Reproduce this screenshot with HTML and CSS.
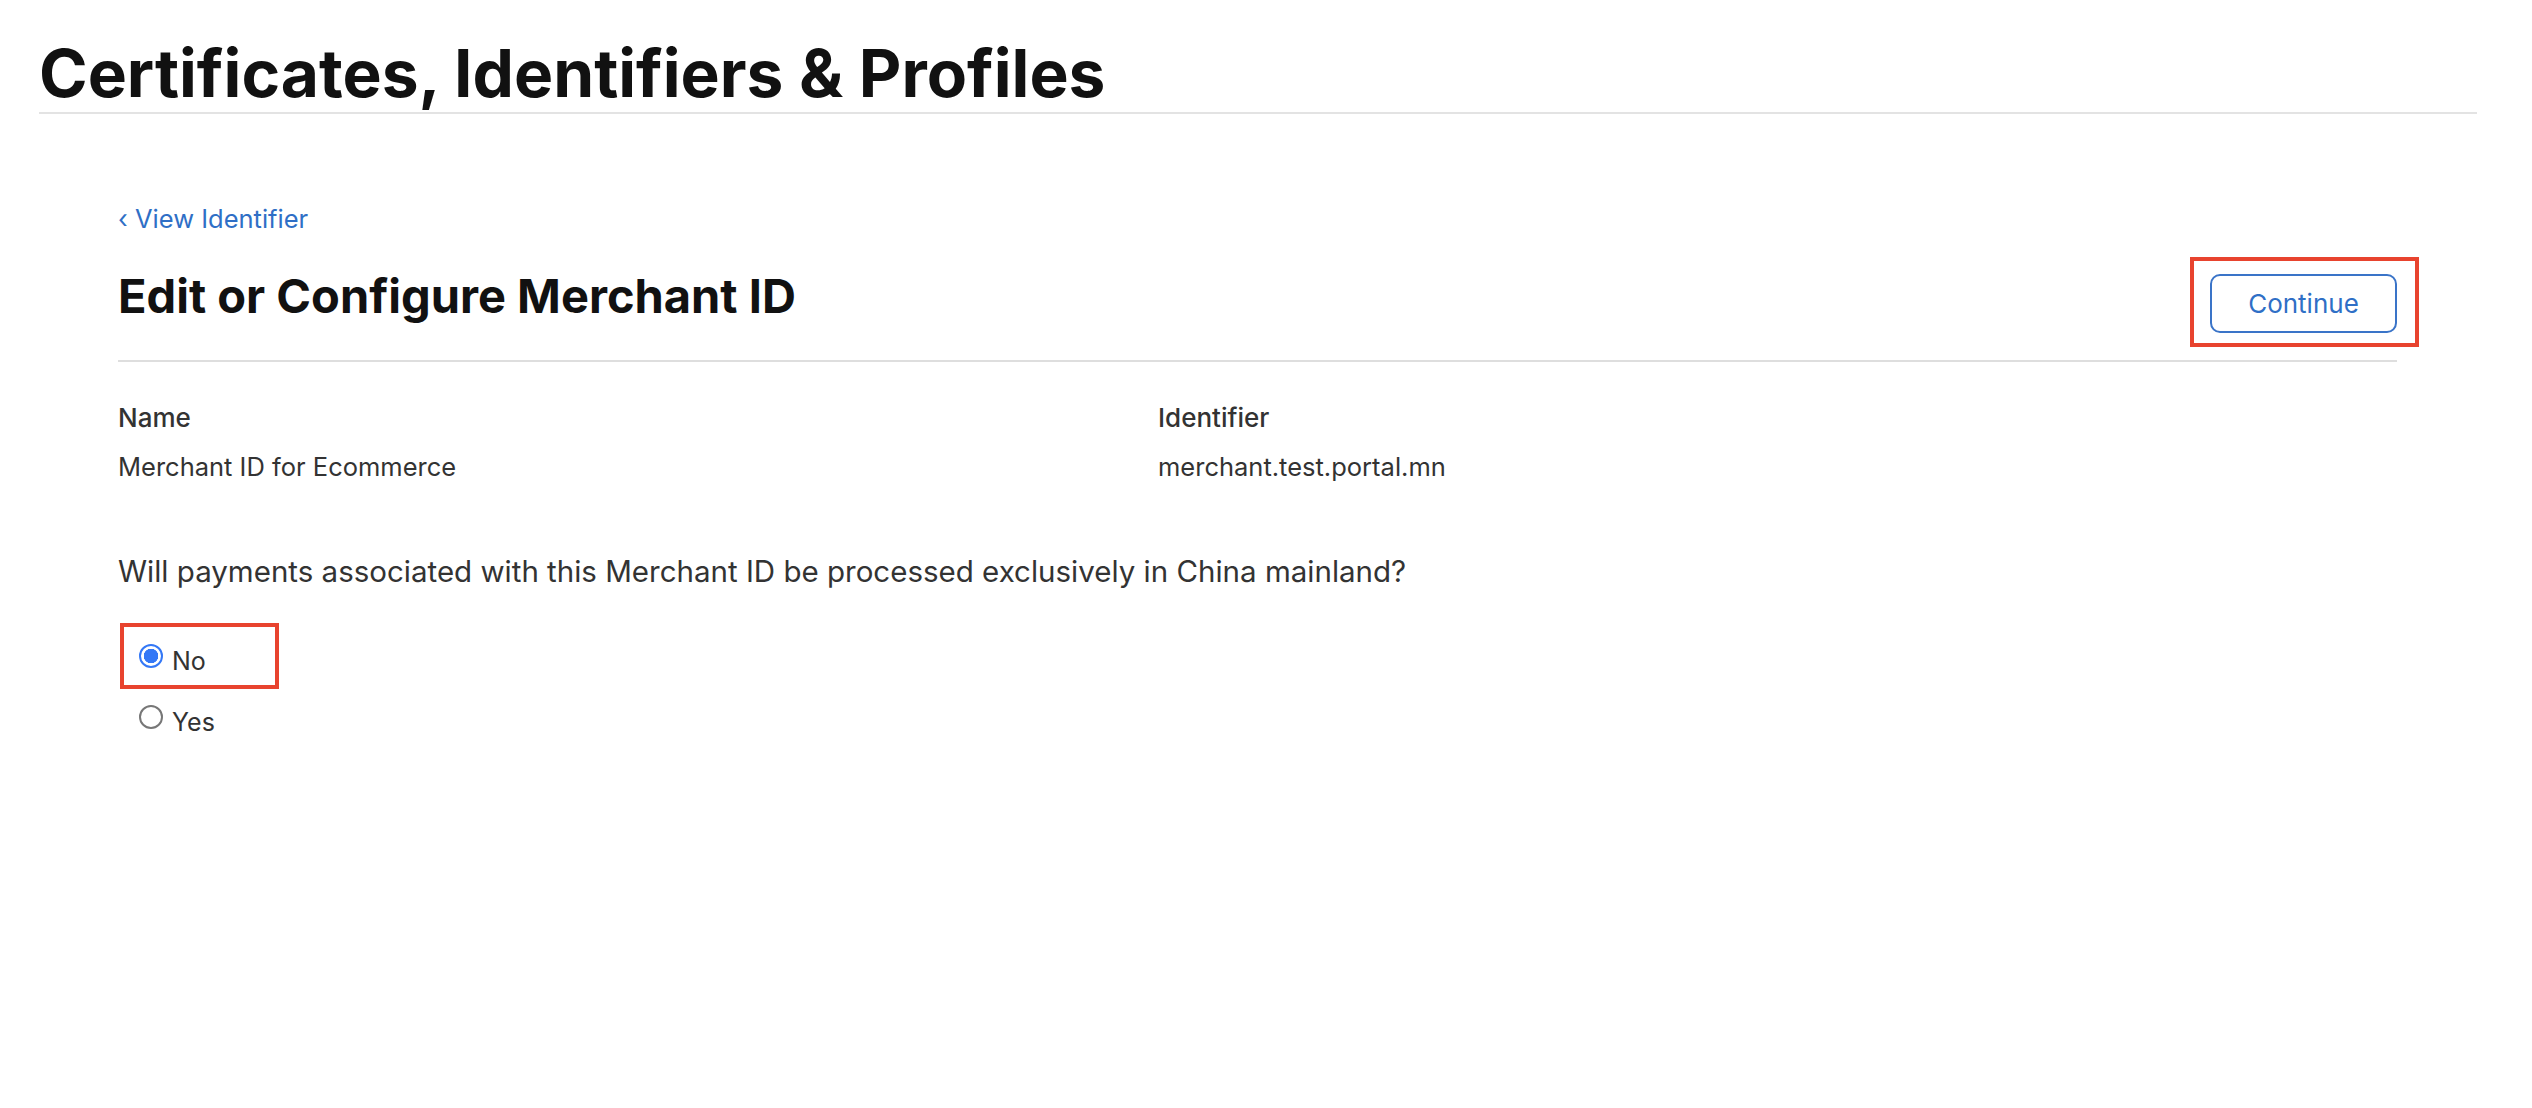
FILE: index.html
```html
<!doctype html>
<html lang="en">
	<head>
		<title>Certificates, Identifiers &amp; Profiles</title>
		<link rel="stylesheet" href="styles.css">
	</head>
	<body>
		<!-- Page title -->
		<header class="page-header">
			<h1>Certificates, Identifiers &amp; Profiles</h1>
		</header>

		<main class="content">
			<a class="back-link" href="#">&lsaquo; View Identifier</a>

			<!-- Title and the continue action -->
			<div class="title-row">
				<h2>Edit or Configure Merchant ID</h2>
				<div class="mark mark-button">
					<button class="btn-continue">Continue</button>
				</div>
			</div>

			<!-- Merchant ID details -->
			<div class="details">
				<div class="field">
					<div class="field-label">Name</div>
					<div class="field-value">Merchant ID for Ecommerce</div>
				</div>
				<div class="field">
					<div class="field-label">Identifier</div>
					<div class="field-value">merchant.test.portal.mn</div>
				</div>
			</div>

			<p class="question">Will payments associated with this Merchant ID be processed exclusively in China mainland?</p>

			<div class="options">
				<div class="mark mark-option">
					<label class="option">
						<input type="radio" name="china" checked>
						<span>No</span>
					</label>
				</div>
				<label class="option">
					<input type="radio" name="china">
					<span>Yes</span>
				</label>
			</div>
		</main>
	</body>
</html>
```

FILE: styles.css
```css
/* Page setup */

body {
	margin: 0;
	background: white;
	color: #333;
	font-family: Inter, "Noto Sans", sans-serif;
}

.page-header {
	padding: 0 55px 0 39px;
}

h1 {
	margin: 0;
	padding-top: 34px;
	border-bottom: 2px solid #e3e3e3;
	color: #111;
	font-size: 65.8px;
	font-weight: 700;
	line-height: 78px;
}

.content {
	padding: 0 135px 0 118px;
}

/* Back link */

.back-link {
	display: block;
	margin-top: 90px;
	color: #2f6fc6;
	font-size: 25.5px;
	line-height: 30px;
	text-decoration: none;
}

/* Title row */

.title-row {
	display: flex;
	justify-content: space-between;
	align-items: flex-start;
	margin-top: 34px;
	padding-bottom: 27px;
	border-bottom: 2px solid #dedede;
}

h2 {
	margin: 0;
	color: #111;
	font-size: 47px;
	font-weight: 700;
	line-height: 56px;
}

.btn-continue {
	display: block;
	width: 187px;
	height: 59px;
	padding: 0;
	background: white;
	border: 2px solid #3a74c8;
	border-radius: 10px;
	color: #2f6fc6;
	font-family: inherit;
	font-size: 26px;
	cursor: pointer;
}

/* Red annotation boxes */

.mark {
	border: 4px solid #e8432e;
}

.mark-button {
	margin: -11px -22px -14px -20px;
	padding: 13px 18px 10px 16px;
}

.mark-option {
	width: fit-content;
	margin: -21px 0 -11px -19px;
	padding: 17px 69px 7px 15px;
}

/* Details */

.details {
	display: grid;
	grid-template-columns: 1040px 1fr;
	margin-top: 40px;
}

.field-label {
	font-size: 26px;
	font-weight: 500;
	line-height: 32px;
}

.field-value {
	margin-top: 17px;
	font-size: 25.5px;
	line-height: 32px;
}

.question {
	margin: 70px 0 0;
	font-size: 29.5px;
	line-height: 36px;
}

/* Radio options */

.options {
	display: flex;
	flex-direction: column;
	gap: 27px;
	margin-top: 55px;
	padding-left: 21px;
}

.option {
	display: flex;
	align-items: center;
	gap: 9px;
	font-size: 25px;
	line-height: 32px;
}

.option input {
	appearance: none;
	width: 24px;
	height: 24px;
	margin: 0 0 10px;
	border: 2px solid #777;
	border-radius: 50%;
	background: white;
}

.option input:checked {
	border-color: #3478f6;
	background: radial-gradient(circle, #3478f6 0 7px, white 7.5px);
}
```
